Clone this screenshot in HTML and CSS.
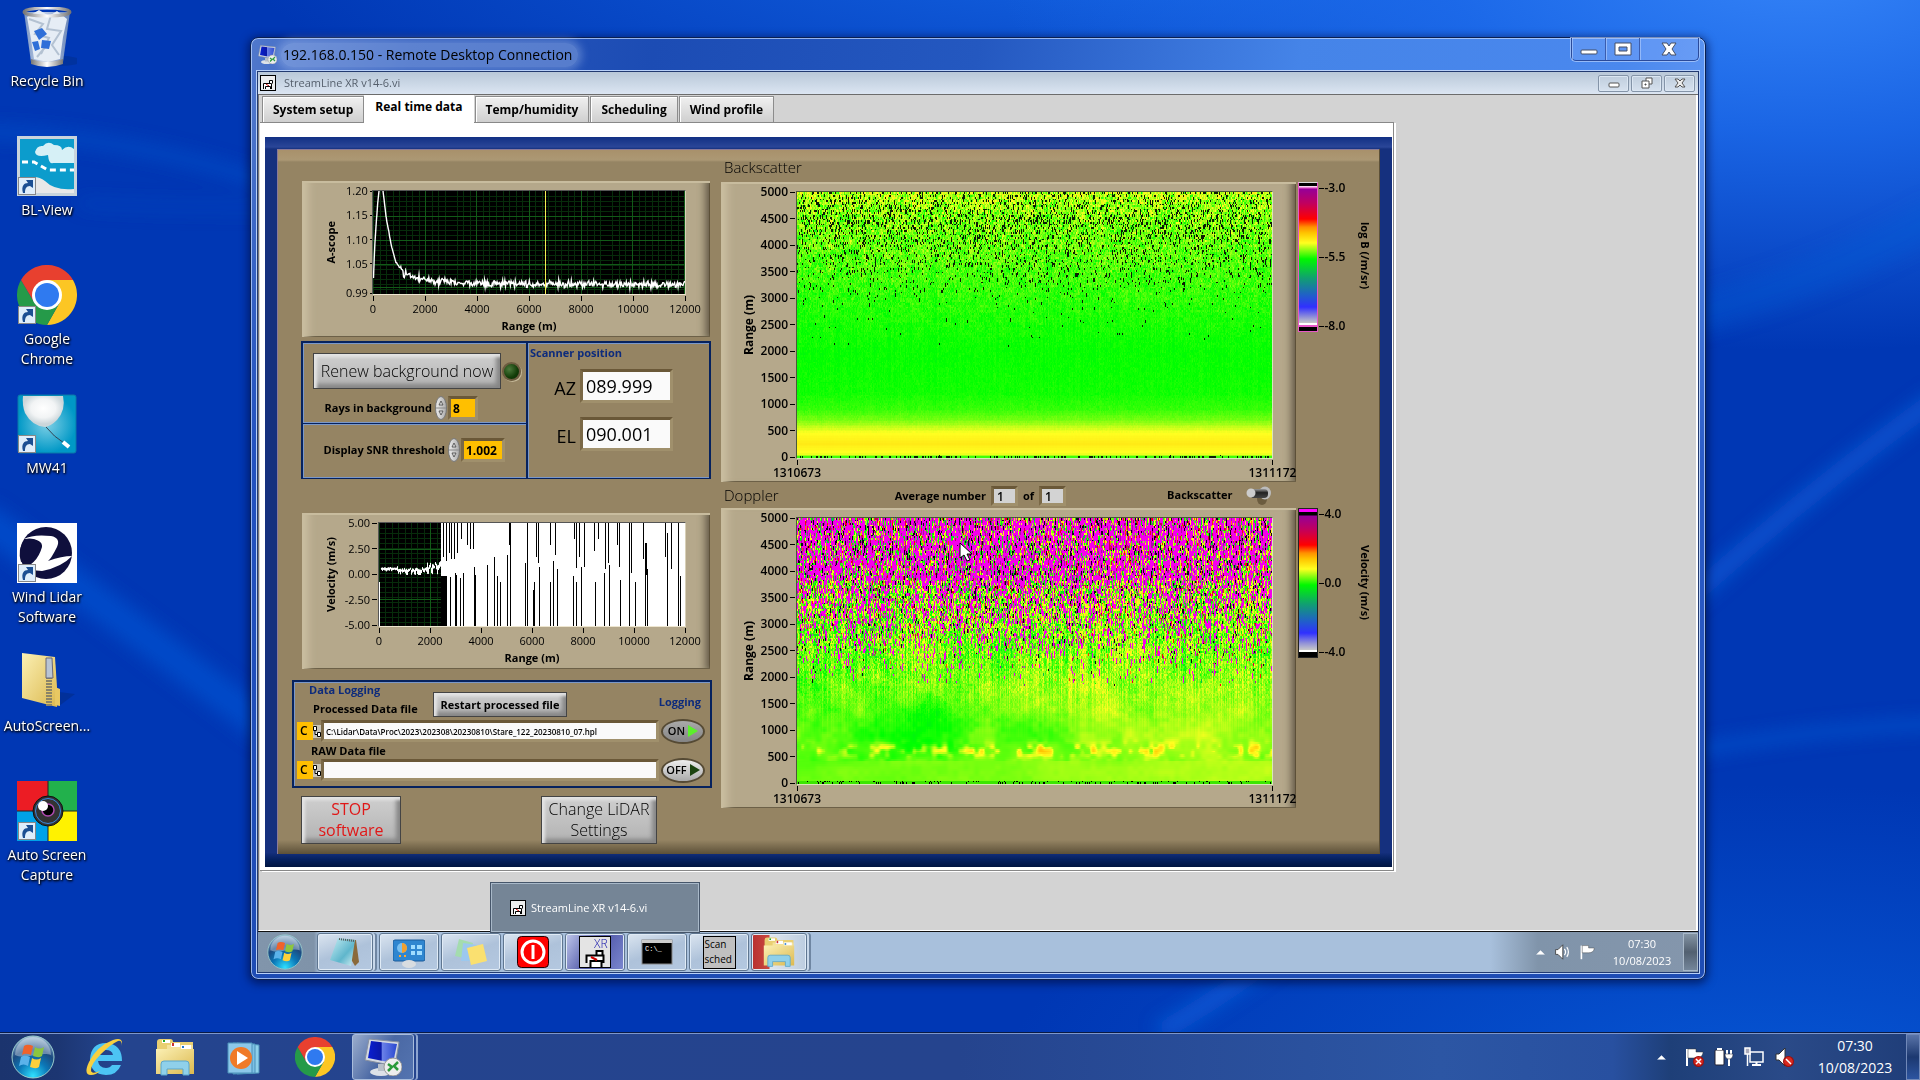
FILE: index.html
```html
<!DOCTYPE html>
<html lang="en">
<head>
<meta charset="utf-8">
<title>Remote Desktop Connection</title>
<link rel="stylesheet" href="styles.css">
</head>
<body>
<svg class="defs" aria-hidden="true">
  <defs>
    <linearGradient id="gBin" x1="0" x2="1"><stop offset="0" stop-color="#8fa6c4"/><stop offset=".4" stop-color="#e8eef6"/><stop offset="1" stop-color="#7c94b8"/></linearGradient>
    <linearGradient id="gMetal" x1="0" x2="1"><stop offset="0" stop-color="#777"/><stop offset=".5" stop-color="#fff"/><stop offset="1" stop-color="#777"/></linearGradient>
    <radialGradient id="gOrb" cx=".5" cy=".95" r=".9"><stop offset="0" stop-color="#2fe0ff"/><stop offset=".4" stop-color="#0b78b8"/><stop offset=".7" stop-color="#1c4a80"/><stop offset="1" stop-color="#8fb0cc"/></radialGradient>
    <linearGradient id="gFold" x1="0" x2="1" y2="1"><stop offset="0" stop-color="#fbf0b4"/><stop offset="1" stop-color="#dcb94f"/></linearGradient>
    <radialGradient id="gMw"><stop offset="0" stop-color="#7fd0e6"/><stop offset="1" stop-color="#0098c6"/></radialGradient>
    <radialGradient id="gBall" cx=".5" cy=".4"><stop offset="0" stop-color="#fff"/><stop offset=".6" stop-color="#f2f4f5"/><stop offset="1" stop-color="#ccd6da"/></radialGradient>
    <linearGradient id="gScr" x1="0" x2="1"><stop offset="0" stop-color="#0a1fd0"/><stop offset=".45" stop-color="#0a18a8"/><stop offset=".5" stop-color="#6a80e8"/><stop offset="1" stop-color="#2a48d0"/></linearGradient>
    <linearGradient id="gPad" x1="0" x2="1" y2="1"><stop offset="0" stop-color="#c8eef4"/><stop offset=".6" stop-color="#5fb6cc"/><stop offset="1" stop-color="#d8f0f4"/></linearGradient>
    <linearGradient id="gSpin" x1="0" x2="1"><stop offset="0" stop-color="#eee"/><stop offset="1" stop-color="#aaa"/></linearGradient>
    <linearGradient id="gLever" y2="1" x2="0"><stop offset="0" stop-color="#999"/><stop offset=".4" stop-color="#222"/><stop offset="1" stop-color="#444"/></linearGradient>
    <filter id="soft" x="-20%" y="-20%" width="140%" height="140%"><feGaussianBlur stdDeviation="9"/></filter>

    <symbol id="shortcut" viewBox="0 0 18 18"><rect x=".5" y=".5" width="17" height="17" fill="#dfeefb" stroke="#888"/><path d="M5 16C3 9 6 6 10 6L8 3h7v8l-3-2c-4 0-5 3-5 7z" fill="#1c4f92"/></symbol>
    <symbol id="chrome" viewBox="0 0 60 60"><path d="M30 15H56A30 30 0 0 1 30 60L43 37z" fill="#fcc624"/><path d="M17 37L4 15A30 30 0 0 0 30 60L43 37z" fill="#259a49"/><path d="M4 15A30 30 0 0 1 56 15H30L17 37z" fill="#e8402f"/><circle cx="30" cy="30" r="15" fill="#fff"/><circle cx="30" cy="30" r="12" fill="#2f7af0"/></symbol>
    <symbol id="orb" viewBox="0 0 44 44"><circle cx="22" cy="22" r="21" fill="url(#gOrb)" stroke="#9cc" stroke-width="1"/><path d="M4 20A18 18 0 0 1 40 20C30 16 14 25 4 20z" fill="#fff" opacity=".35"/><path d="M13 11c3-2 6-1 9 0l-2 9c-3-1-6-2-9 0z" fill="#f0622a"/><path d="M24 12c3 2 6 2 9 0l-2 9c-3 2-6 1-9 0z" fill="#8cc63f"/><path d="M10 22c3-2 6-1 9 0l-2 9c-3-2-6-2-9 0z" fill="#5ab2ea"/><path d="M21 23c3 2 6 2 9 0l-2 9c-3 2-6 1-9 0z" fill="#fdd03b"/></symbol>
    <symbol id="explorer" viewBox="0 0 40 38"><path d="M2 4q0-3 3-3h10q3 0 3 3h20v30H2z" fill="#e9cf72"/><rect x="7" y="2" width="8" height="3" fill="#fff"/><rect x="8" y="2" width="2" height="2" fill="#2a2"/><path d="M12 7h26v5H12z" fill="#f4e29a"/><rect x="16" y="5" width="9" height="4" fill="#fff"/><rect x="17" y="5" width="2" height="3" fill="#c33"/><rect x="26" y="7" width="10" height="4" fill="#fff"/><rect x="27" y="8" width="2" height="2" fill="#27c"/><path d="M1 11h38v25H1z" fill="url(#gFold)"/><path d="M6 26q0-3 3-3h22q3 0 3 3v11h-6v-6H12v6H6z" fill="#8fd0ea" stroke="#5aa6cc"/></symbol>
    <symbol id="xr" viewBox="0 0 16 16"><rect x=".5" y=".5" width="15" height="15" fill="#eee" stroke="#000"/><path d="M3.500 14V8.500h8V14M5.500 14v-2.500h5V14M9.500 8.500v-3h3v3" fill="#fff" stroke="#000"/><path d="M6 9l3 2" stroke="#c00"/></symbol>
    <symbol id="rdp" viewBox="0 0 38 38"><ellipse cx="17" cy="34" rx="11" ry="4" fill="#dde2e8"/><path d="M14 26h8v7h-8z" fill="#b8c0ca"/><path d="M5 1l30 3-4 24L1 22z" fill="#d3d9e2" stroke="#8890a0"/><path d="M7 3l26 3-4 19L4 20z" fill="url(#gScr)"/><circle cx="29" cy="29" r="9" fill="#eee" stroke="#999"/><path d="M24 26l4 3-4 4M34 24l-4 4 4 4" fill="none" stroke="#2a9a3a" stroke-width="2.500"/></symbol>
    <symbol id="spk" viewBox="0 0 20 20"><path d="M2 7h3l6-6v18l-6-6H2z" fill="#fff" stroke="#333"/></symbol>
    <symbol id="flag" viewBox="0 0 20 20"><path d="M3 2v17" stroke="#fff" stroke-width="2"/><path d="M4 2h8v3h7v1q-1 5-7 5h-8z" fill="#fff" stroke="#333" stroke-width=".5"/></symbol>
    <symbol id="bad" viewBox="0 0 10 10"><circle cx="5" cy="5" r="4.500" fill="#d92a20" stroke="#911"/></symbol>
    <symbol id="up" viewBox="0 0 10 6"><path d="M0 6l5-5 5 5z" fill="#fff"/></symbol>
    <symbol id="spin" viewBox="0 0 12 24"><ellipse cx="6" cy="12" rx="5.500" ry="11.500" fill="url(#gSpin)" stroke="#777"/><path d="M1 12h10" stroke="#888"/><path d="M4 9l2-4 2 4zM4 15h4l-2 4z" fill="#ddd" stroke="#444" stroke-width=".8"/></symbol>
    <symbol id="tree" viewBox="0 0 8 13"><path d="M0 0h8v13H0z" fill="#c8c4b8"/><path d="M.5 1.500h3v4h-3zM4.500 7.500h3v4h-3zM2 5.500v4h2.500" fill="#fff" stroke="#000"/></symbol>
  </defs>
</svg>

<div class="desktop">
  <svg class="wallpaper" viewBox="0 0 1920 1080" preserveAspectRatio="none" aria-hidden="true">
    <g filter="url(#soft)" fill="none">
      <path d="M-20 138Q120 140 270 192" stroke="#0a55d0" stroke-width="14" opacity=".5"/>
      <path d="M80 212Q160 218 270 217" stroke="#0a50c8" stroke-width="8" opacity=".5"/>
      <path d="M-20 540Q100 630 270 765" stroke="#0a5ad8" stroke-width="34" opacity=".55"/>
      <path d="M1160 1080Q1280 1010 1450 850 1600 700 1707 610 1820 505 1940 415" stroke="#0f66e4" stroke-width="20" opacity=".55"/>
      <path d="M1690 330Q1830 290 1940 225" stroke="#0c60dc" stroke-width="40" opacity=".3"/>
      <path d="M1690 786Q1820 762 1940 757" stroke="#0c62de" stroke-width="12" opacity=".5"/>
    </g>
  </svg>

  <nav class="shortcuts" aria-label="Desktop icons">
    <a href="#bin" class="shortcut"><svg viewBox="0 0 60 60"><ellipse cx="44" cy="54" rx="20" ry="5" fill="#012a80" opacity=".4"/><path d="M7 5h46l-7 50q-16 6-32 0z" fill="url(#gBin)" opacity=".85"/><path d="M10 10l12-7 10 6 8-5 10 8-4 18-3 22-12 3-14-3-3-20z" fill="#e6edf5"/><path d="M12 12l14 5-8 10 14 4-8 16M34 8l-4 14 14 2-9 14 7 10M20 50l10-12" fill="none" stroke="#b4c2d2" stroke-width="2"/><path d="M17 24l8-3 5 6-8 6zM25 33l9 1-2 8-8-1zM15 35l6-1 2 8-5 2z" fill="#2f6fd8"/><ellipse cx="30" cy="5" rx="23" ry="4" fill="none" stroke="url(#gMetal)" stroke-width="3"/><path d="M14 52q16 6 32 0v5q-16 6-32 0z" fill="url(#gMetal)"/></svg><span>Recycle Bin</span></a>
    <a href="#blview" class="shortcut"><svg viewBox="0 0 60 60"><rect width="60" height="60" fill="#c8d4dc"/><rect x="3" y="3" width="54" height="54" fill="#0c9ccc"/><path d="M18 16q2-7 8-6 5-6 11-1 8 0 8 5 6-6 12-1v14H36q-4 2-5-8-12 3-13-3z" fill="#d6f0f6"/><path d="M5 26h12l14 8h26" fill="none" stroke="#fff" stroke-width="3" stroke-dasharray="6 4"/><path d="M3 45q15-8 25 0 10 10 29 8v4H3z" fill="#e8e8e8"/><use href="#shortcut" x="1" y="41" width="18" height="18"/></svg><span>BL-View</span></a>
    <a href="#chrome" class="shortcut"><svg viewBox="0 0 60 60"><use href="#chrome" width="60" height="60"/><use href="#shortcut" x="1" y="41" width="18" height="18"/></svg><span>Google Chrome</span></a>
    <a href="#mw41" class="shortcut"><svg viewBox="0 0 60 60"><rect x="1" y="1" width="58" height="58" rx="2" fill="url(#gMw)" stroke="#0a78a8"/><path d="M6 2h40q3 14-6 24-6 6-12 7-13-1-20-14-3-8-2-17z" fill="url(#gBall)"/><path d="M29 33q8 10 18 16" stroke="#345" fill="none"/><path d="M46 48l6 5" stroke="#fff" stroke-width="4"/><use href="#shortcut" x="1" y="41" width="18" height="18"/></svg><span>MW41</span></a>
    <a href="#lidar" class="shortcut"><svg viewBox="0 0 60 60"><rect width="60" height="60" fill="#fff"/><circle cx="29" cy="30" r="26" fill="#0f0f3c"/><path d="M7 16Q16 11 34 13q10 2 6 11-6 12-9 14Q45 33 55 33q-10 11-30 15L3 46Q20 42 25 24 26 15 7 16z" fill="#fff"/><path d="M8 16Q20 14 24 22 24 34 4 39 0 26 8 16z" fill="#0f0f3c"/><use href="#shortcut" x="1" y="41" width="18" height="18"/></svg><span>Wind Lidar Software</span></a>
    <a href="#zip" class="shortcut"><svg viewBox="0 0 60 60"><path d="M42 40l16 2-16 12z" fill="#012a80" opacity=".5"/><path d="M5 1l33 4 2 30v20L5 46z" fill="url(#gFold)"/><path d="M38 35l5 2v17l-5-1z" fill="#e8c862"/><path d="M32 25v29" stroke="#8a8468" stroke-width="6" stroke-dasharray="2 1"/><path d="M29 6h6l1 20h-7z" fill="#b8c4d4" stroke="#667"/></svg><span>AutoScreen...</span></a>
    <a href="#asc" class="shortcut"><svg viewBox="0 0 60 60"><rect width="31" height="30" fill="#ec1c24"/><rect x="31" width="29" height="30" fill="#22b14c"/><rect y="30" width="31" height="30" fill="#00a2e8"/><rect x="31" y="30" width="29" height="30" fill="#fff200"/><path d="M31 0v60M0 30h60" stroke="#222"/><circle cx="31" cy="30" r="15" fill="#333" stroke="#111"/><circle cx="31" cy="30" r="12.500" fill="none" stroke="#3a8ae0"/><circle cx="31" cy="29" r="6" fill="#000" stroke="#b04ab0" stroke-width="1.500"/><circle cx="26" cy="25" r="5" fill="#fff"/><use href="#shortcut" x="1" y="41" width="18" height="18"/></svg><span>Auto Screen Capture</span></a>
  </nav>

  <section class="window">
    <header class="window-title">
      <svg class="window-icon" viewBox="0 0 38 38"><use href="#rdp"/></svg>
      <h1>192.168.0.150 - Remote Desktop Connection</h1>
      <div class="window-buttons">
        <button aria-label="Minimise"><svg viewBox="0 0 20 16"><rect x="2" y="9" width="16" height="4" rx="1" fill="#fff" stroke="#444f66"/></svg></button>
        <button aria-label="Maximise"><svg viewBox="0 0 20 16"><path d="M2 2h16v12H2zM6 6v4h8V6z" fill="#fff" fill-rule="evenodd" stroke="#444f66"/></svg></button>
        <button class="close" aria-label="Close"><svg viewBox="0 0 20 16"><path d="M3 2h5l2 3 2-3h5l-4 6 4 6h-5l-2-3-2 3H3l4-6z" fill="#fff" stroke="#444f66"/></svg></button>
      </div>
    </header>
    <div class="client">
      <header class="app-title">
        <svg class="vi-icon" viewBox="0 0 16 16"><use href="#xr"/></svg>
        <h2>StreamLine XR v14-6.vi</h2>
        <div class="app-buttons">
          <button aria-label="Minimise"><svg viewBox="0 0 12 12"><rect x="1" y="6" width="10" height="4" rx="1" fill="#fff" stroke="#555"/></svg></button>
          <button aria-label="Restore"><svg viewBox="0 0 12 12"><path d="M5 1h6v6H5z" fill="#fff" stroke="#555"/><path d="M1 4h7v7H1z" fill="#fff" stroke="#555"/><path d="M4 7h1v1H4z" stroke="#555"/></svg></button>
          <button aria-label="Close"><svg viewBox="0 0 12 12"><path d="M1 2h3l2 2 2-2h3L8 6l3 4H8L6 8l-2 2H1l3-4z" fill="#eee" stroke="#555"/></svg></button>
        </div>
      </header>

      <main class="workspace">
        <div class="tabs" role="tablist">
          <button role="tab">System setup</button>
          <button role="tab" aria-selected="true">Real time data</button>
          <button role="tab">Temp/humidity</button>
          <button role="tab">Scheduling</button>
          <button role="tab">Wind profile</button>
        </div>
        <div class="sheet"><div class="frame"><div class="panel">
          <div class="controls">
            <section class="graph small">
              <div class="y-title">A-scope</div>
              <div class="y-axis uneven"><b>1.20</b><b>1.15</b><b>1.10</b><b>1.05</b><b>0.99</b></div>
              <div class="plot"><canvas id="ascope" width="314" height="105"></canvas></div>
              <div class="x-axis"><b>0</b><b>2000</b><b>4000</b><b>6000</b><b>8000</b><b>10000</b><b>12000</b></div>
              <div class="x-title">Range (m)</div>
            </section>

            <section class="settings">
              <div class="cell renew">
                <div class="row"><button class="key light">Renew background now</button><i class="led"></i></div>
                <div class="row spin-row"><label for="rays">Rays in background</label><svg class="spin" viewBox="0 0 12 24"><use href="#spin"/></svg><input id="rays" class="field amber rays" value="8"></div>
              </div>
              <div class="cell snr"><label for="snr">Display SNR threshold</label><svg class="spin" viewBox="0 0 12 24"><use href="#spin"/></svg><input id="snr" class="field amber" value="1.002"></div>
              <div class="cell scanner">
                <h3>Scanner position</h3>
                <div class="angle"><label for="az">AZ</label><input id="az" class="field" value="089.999" readonly></div>
                <div class="angle"><label for="el">EL</label><input id="el" class="field" value="090.001" readonly></div>
              </div>
            </section>

            <section class="graph small velocity">
              <div class="y-title">Velocity (m/s)</div>
              <div class="y-axis"><b>5.00</b><b>2.50</b><b>0.00</b><b>-2.50</b><b>-5.00</b></div>
              <div class="plot"><canvas id="velocity" width="308" height="104"></canvas></div>
              <div class="x-axis"><b>0</b><b>2000</b><b>4000</b><b>6000</b><b>8000</b><b>10000</b><b>12000</b></div>
              <div class="x-title">Range (m)</div>
            </section>

            <section class="logging">
              <div class="log-head">
                <div><h3>Data Logging</h3><label for="proc">Processed Data file</label></div>
                <button class="key bold">Restart processed file</button>
                <h3 class="log-state">Logging</h3>
              </div>
              <div class="log-row"><span class="drive">C</span><svg class="tree" viewBox="0 0 8 13"><use href="#tree"/></svg><input id="proc" class="field path" value="C:\Lidar\Data\Proc\2023\202308\20230810\Stare_122_20230810_07.hpl"><button class="oval on" aria-pressed="true">ON<i></i></button></div>
              <label class="raw-label" for="raw">RAW Data file</label>
              <div class="log-row"><span class="drive">C</span><svg class="tree" viewBox="0 0 8 13"><use href="#tree"/></svg><input id="raw" class="field path" value=""><button class="oval" aria-pressed="false">OFF<i></i></button></div>
            </section>

            <div class="actions">
              <button class="key light stop">STOP<br>software</button>
              <button class="key light change">Change LiDAR<br>Settings</button>
            </div>
          </div>

          <div class="maps">
            <div class="map-head first"><h3>Backscatter</h3></div>
            <div class="map-row">
              <section class="graph large">
                <div class="y-title">Range (m)</div>
                <div class="y-axis"><b>5000</b><b>4500</b><b>4000</b><b>3500</b><b>3000</b><b>2500</b><b>2000</b><b>1500</b><b>1000</b><b>500</b><b>0</b></div>
                <div class="plot"><canvas id="backscatter" width="477" height="160"></canvas></div>
                <div class="x-axis"><b>1310673</b><b>1311172</b></div>
              </section>
              <div class="ramp pink"></div>
              <div class="ramp-axis"><b>-3.0</b><b>-5.5</b><b>-8.0</b></div>
              <div class="ramp-title">log B (/m/sr)</div>
            </div>
            <div class="map-head">
              <h3>Doppler</h3>
              <div class="average"><label for="avg">Average number</label><input id="avg" class="field grey" value="1" readonly><label for="avgof">of</label><input id="avgof" class="field grey" value="1" readonly></div>
              <div class="toggle"><span id="bsw">Backscatter</span><button role="switch" aria-checked="false" aria-labelledby="bsw"><svg viewBox="0 0 26 22"><ellipse cx="16" cy="15" rx="5" ry="6" fill="#5a4c30" opacity=".7"/><ellipse cx="19" cy="9" rx="6" ry="6.500" fill="#bbb"/><rect x="4" y="5" width="18" height="9" rx="4" fill="url(#gLever)"/><circle cx="5" cy="9" r="4.500" fill="#ccc"/></svg></button></div>
            </div>
            <div class="map-row">
              <section class="graph large">
                <div class="y-title">Range (m)</div>
                <div class="y-axis"><b>5000</b><b>4500</b><b>4000</b><b>3500</b><b>3000</b><b>2500</b><b>2000</b><b>1500</b><b>1000</b><b>500</b><b>0</b></div>
                <div class="plot"><canvas id="doppler" width="477" height="160"></canvas><svg class="cursor" viewBox="0 0 13 20"><path d="M1 1v15l4-3 3 6 3-1-3-6h5z" fill="#fff" stroke="#000"/></svg></div>
                <div class="x-axis"><b>1310673</b><b>1311172</b></div>
              </section>
              <div class="ramp"></div>
              <div class="ramp-axis"><b>4.0</b><b>0.0</b><b>-4.0</b></div>
              <div class="ramp-title">Velocity (m/s)</div>
            </div>
          </div>
        </div></div></div>
      </main>

      <footer class="inner-bar">
        <button class="inner-start" aria-label="Start"><svg viewBox="0 0 44 44"><use href="#orb"/></svg></button>
        <button class="task stack" aria-label="Notepad"><svg viewBox="0 0 32 32"><path d="M10 3l17 1 3 22-4 4z" fill="#8a6a3a"/><path d="M9 2l17 2-4 26L1 24z" fill="url(#gPad)"/><path d="M10 3l15 2" stroke="#555" stroke-width="2" stroke-dasharray="1 1"/></svg></button>
        <button class="task" aria-label="Control panel"><svg viewBox="0 0 32 32"><rect x="0" y="4" width="32" height="21" rx="2" fill="#2f86d0" stroke="#1a5a9a"/><circle cx="9" cy="12" r="5" fill="#7ac0f0"/><path d="M9 12V7a5 5 0 0 1 0 10z" fill="#f0a030"/><path d="M18 9h4v4h-4zM24 9h5v4h-5zM18 15h4v4h-4zM24 15h5v4h-5z" fill="#9fdcff"/><path d="M6 20h2M11 20h2" stroke="#fa3" stroke-width="2"/><ellipse cx="16" cy="28" rx="7" ry="4" fill="#d8dce0"/></svg></button>
        <button class="task" aria-label="Sticky notes"><svg viewBox="0 0 32 32"><path d="M4 3l14 4-4 16-14-3z" fill="#a4dcae"/><path d="M8 7l14 2v16H6z" fill="#9cc8ee"/><path d="M12 12l16-4 4 17-16 4z" fill="#fae070"/></svg></button>
        <button class="task" aria-label="Shutdown"><svg viewBox="0 0 32 32"><rect x=".5" y=".5" width="31" height="31" rx="4" fill="#f00" stroke="#200"/><circle cx="16" cy="16" r="11" fill="none" stroke="#fff" stroke-width="3"/><path d="M16 9v14" stroke="#fff" stroke-width="3"/></svg></button>
        <div class="task-wrap">
          <div class="preview"><svg class="vi-icon" viewBox="0 0 16 16"><use href="#xr"/></svg>StreamLine XR v14-6.vi</div>
          <button class="task active" aria-label="StreamLine XR"><svg viewBox="0 0 32 32"><rect x=".5" y=".5" width="31" height="31" fill="#e4e4e4" stroke="#000"/><path d="M7.500 27V19.500h17V27M11.500 31v-6h11v6M17.500 19v-4h6v4" fill="#fff" stroke="#000" stroke-width="2"/><path d="M12 21l6 3" stroke="#c00" stroke-width="2"/><text x="15" y="12" class="svg-xr">XR</text></svg></button>
        </div>
        <button class="task" aria-label="Command prompt"><svg viewBox="0 0 32 32"><rect x="1" y="4" width="30" height="24" fill="#000" stroke="#888"/><path d="M1 4h30v3H1z" fill="#ccc"/><text x="4" y="15" class="svg-cmd">C:\_</text></svg></button>
        <button class="task" aria-label="Scan scheduler"><span class="scan"><span>Scan</span><span>sched</span></span></button>
        <button class="task stack red" aria-label="Explorer"><svg viewBox="0 0 40 38"><use href="#explorer"/></svg></button>
        <div class="inner-tray">
          <svg class="up" viewBox="0 0 10 6"><use href="#up"/></svg>
          <svg class="tray" viewBox="0 0 20 20"><use href="#spk"/><path d="M13 6q3 4 0 8M16 4q4 6 0 12" fill="none" stroke="#fff" stroke-width="1.500"/></svg>
          <svg class="tray" viewBox="0 0 20 20"><use href="#flag"/></svg>
          <time>07:30<br>10/08/2023</time>
        </div>
        <button class="peek" aria-label="Show desktop"></button>
      </footer>
    </div>
  </section>
</div>

<footer class="taskbar">
  <button aria-label="Start" class="start"><svg viewBox="0 0 44 44"><use href="#orb"/></svg></button>
  <button aria-label="Internet Explorer"><svg viewBox="0 0 40 40"><path d="M37 24H13q1 7 8 7 4 0 6-3h9q-4 10-15 10Q5 37 5 22 6 6 21 6q16 1 16 18zM13 18h15q-1-5-7-5t-8 5z" fill="#4cc4f4"/><path d="M37 5Q36 0 28 3 12 9 4 25-2 38 6 38q5 0 9-4-9 4-9-1 0-6 10-16Q26 7 33 4q4-1 4 5z" fill="#f8d040"/></svg></button>
  <button aria-label="Explorer"><svg viewBox="0 0 40 38"><use href="#explorer"/></svg></button>
  <button aria-label="Media player"><svg viewBox="0 0 40 40"><path d="M12 6l22 2v28l-22 1z" fill="#8fd0ea" stroke="#4a90b8"/><path d="M8 6l22 1v29l-22 1z" fill="#7cc0e4" stroke="#4a90b8"/><path d="M3 6h24v30H3z" fill="#8cc8ea" stroke="#4a90b8"/><circle cx="16" cy="21" r="11" fill="#f07a28"/><path d="M12 14v14l11-7z" fill="#fff"/></svg></button>
  <button aria-label="Chrome"><svg viewBox="0 0 60 60"><use href="#chrome"/></svg></button>
  <button aria-label="Remote Desktop" class="running"><svg viewBox="0 0 38 38"><use href="#rdp"/></svg></button>
  <div class="notify">
    <svg class="up" viewBox="0 0 10 6"><use href="#up"/></svg>
    <svg class="tray" viewBox="0 0 20 20"><use href="#flag"/><use href="#bad" x="9" y="9" width="11" height="11"/><path d="M12 12l5 5M17 12l-5 5" stroke="#fff" stroke-width="1.500"/></svg>
    <svg class="tray" viewBox="0 0 20 20"><rect x="1" y="3" width="9" height="15" rx="1" fill="#fff" stroke="#223"/><path d="M3 2h5" stroke="#fff" stroke-width="2"/><path d="M13 3v4M17 3v4M15 11v8" stroke="#fff" stroke-width="2"/><path d="M11 7h8q0 5-4 5T11 7z" fill="#fff" stroke="#223" stroke-width=".5"/></svg>
    <svg class="tray" viewBox="0 0 20 20"><path d="M6 5h13v10H6z" fill="#2a4a80" stroke="#fff" stroke-width="1.500"/><path d="M8 18h9M12.500 15v3" stroke="#fff" stroke-width="2"/><path d="M1 1h5v6H1zM3.500 7v12" fill="#aab" stroke="#fff" stroke-width="1.500"/></svg>
    <svg class="tray" viewBox="0 0 20 20"><use href="#spk"/><use href="#bad" x="9" y="9" width="11" height="11"/><path d="M12 12l5 5" stroke="#fff" stroke-width="1.500"/></svg>
    <time>07:30<br>10/08/2023</time>
  </div>
  <button class="peek" aria-label="Show desktop"></button>
</footer>
<script src="app.js"></script>
</body>
</html>
```
FILE: styles.css
```css
* { box-sizing: border-box; }
html, body { height: 100%; margin: 0; }
body { display: flex; flex-direction: column; overflow: hidden; background: #0037b4; font: 12px/16px "Open Sans", "Noto Sans", sans-serif; color: #000; }
h1, h2, h3 { margin: 0; font: inherit; }
button { margin: 0; padding: 0; border: 0; background: none; font: inherit; color: inherit; }
svg { display: block; flex: none; }
.defs { position: absolute; width: 0; height: 0; }

/* Desktop */
.desktop { position: relative; flex: 1; min-height: 0;
  background:
    radial-gradient(ellipse 42% 38% at 94% -4%, #3584f8 0, rgba(30,108,236,.85) 45%, rgba(0,60,190,0) 100%),
    radial-gradient(ellipse 50% 24% at 62% -6%, #1668e8 0, rgba(0,80,210,0) 100%),
    radial-gradient(ellipse 40% 30% at 92% 106%, #0656d4 0, rgba(0,60,190,0) 100%),
    #0037b4; }
.wallpaper { position: absolute; inset: 0; width: 100%; height: 100%; }
.shortcuts { position: relative; width: 94px; padding-top: 7px; display: flex; flex-direction: column; }
.shortcut { height: 129px; display: flex; flex-direction: column; align-items: center; gap: 4px; color: #fff; text-decoration: none; text-align: center; font-size: 14px; line-height: 20px; text-shadow: 1px 1px 2px #000, 0 1px 3px #000; }
.shortcut svg { width: 60px; height: 60px; }
.shortcut span { padding: 0 4px; }

/* Remote desktop window */
.window { position: absolute; left: 250px; top: 37px; right: 214px; bottom: 52px; display: flex; flex-direction: column; border: 1px solid #0b2050; border-radius: 8px;
  background: linear-gradient(180deg, rgba(20,70,190,0) 0, rgba(28,76,190,0) 8%, rgba(28,76,190,.8) 45%, #1e4cb4 100%), linear-gradient(100deg, #5078cc 0, #2a58bc 10%, #1c4cb4 25%, #2458c0 45%, #4584e8 65%, #4a88ee 85%, #7aa8f8 100%);
  box-shadow: inset 0 0 0 1px rgba(190,214,255,.75), 0 2px 8px 2px rgba(0,10,60,.6); }
.window-title { height: 32px; display: flex; align-items: flex-start; padding-left: 7px; }
.window-icon { width: 19px; height: 19px; margin-top: 7px; }
.window-title h1 { margin: 5px 0 0 4px; padding: 2px 6px 2px 2px; font-size: 14px; line-height: 20px; border-radius: 12px; background: rgba(190,210,245,.35); box-shadow: 0 0 8px 4px rgba(190,210,245,.35); }
.window-buttons { margin: 0 6px 0 auto; display: flex; height: 23px; border: 1px solid #2a4a9a; border-top: 0; border-radius: 0 0 5px 5px; box-shadow: 0 0 0 1px rgba(200,220,255,.6); background: rgba(140,180,255,.3); }
.window-buttons button { width: 34px; display: grid; place-items: center; border-right: 1px solid #3a5cae; box-shadow: inset 1px 0 rgba(200,220,255,.5); }
.window-buttons .close { width: 58px; border-right: 0; }
.window-buttons svg { width: 20px; height: 16px; }
.client { flex: 1; min-height: 0; margin: 0 5px 5px; border: 1px solid #b8d0f8; display: flex; flex-direction: column; background: #d3d3d3; outline: 1px solid #223a70; outline-offset: -2px; padding: 1px; }

.app-title { height: 23px; flex: none; display: flex; align-items: center; padding: 0 3px 0 2px; background: linear-gradient(#b9c8d8, #dbe5f2); border-bottom: 1px solid #6c6c6c; }
.vi-icon { width: 16px; height: 16px; }
.app-title h2 { margin-left: 8px; font-size: 11px; color: #555f6c; }
.app-buttons { margin-left: auto; display: flex; gap: 2px; }
.app-buttons button { width: 31px; height: 17px; display: grid; place-items: center; border: 1px solid #8494a8; border-radius: 2px; box-shadow: inset 0 0 0 1px #dbe6f2; }
.app-buttons svg { width: 12px; height: 12px; }

.workspace { flex: 1; min-height: 0; overflow: hidden; border-left: 1px solid #777; border-right: 2px solid #fff; border-bottom: 1px solid #fff; padding: 0 0 0 1px; }
.tabs { height: 27px; padding-left: 2px; display: flex; align-items: flex-end; }
.tabs button { height: 26px; padding: 0 10px; border: 1px solid #8c8c8c; border-bottom: 0; background: linear-gradient(#f0f0f0, #cfcfcf); box-shadow: inset 1px 1px #fff; font-weight: 700; line-height: 24px; }
.tabs button + button { margin-left: 1px; }
.tabs button[aria-selected="true"] { height: 28px; margin: 0 0 -1px; padding: 0 11px 4px; background: #fff; border-width: 0; position: relative; }
.sheet { width: 79%; padding: 14px 1px 3px 5px; background: #fff; border: 1px solid #888; border-left: 0; box-shadow: 2px 1px #fff; }
.frame { padding: 12px 12px 13px; background: linear-gradient(#123084 0, #2a4698 10px, #15307e 12px, #15307e 98%, #04205e 99%, #001440 100%); }
.panel { display: grid; grid-template-columns: 420px minmax(0, 1fr); gap: 9px; padding-left: 15px; box-shadow: inset -1px 0 #5c5038, inset 1px 1px #8a7a98;
  background: linear-gradient(#a8906a 0, #ac9874 11px, #958463 13px, #958463 calc(100% - 14px), #5c5038 100%); }

/* Graph widgets */
.graph { display: grid; background: #b5a88b; box-shadow: inset 2px 2px #c8bc9e, inset 10px 0 8px -4px #ccc0a2, inset -1px -1px #5c5038, inset -10px 0 8px -6px #5c5240; }
.graph.small { height: 156px; margin: 0 2px 0 10px; grid-template-columns: 44px 26px minmax(0, 1fr) 24px; grid-template-rows: 9px 105px 25px 17px; }
.graph.velocity { grid-template-columns: 38px 38px minmax(0, 1fr) 24px; }
.graph.large { grid-template-columns: 38px 37px minmax(0, 1fr) 23px; grid-template-rows: 9px 268px 23px; height: 300px; }
.y-title { grid-area: 2 / 1; writing-mode: vertical-rl; transform: rotate(180deg); justify-self: end; align-self: center; font-weight: 700; white-space: nowrap; font-size: 11px; }
.small .y-title { justify-self: start; margin-left: 21px; }
.large .y-title { font-size: 12px; margin-right: 2px; }
.y-axis { grid-area: 2 / 2; display: flex; flex-direction: column; justify-content: space-between; padding: 1px 0 2px; }
.y-axis.uneven { display: grid; grid-template-rows: 5fr 5fr 5fr 6fr 0; }
.y-axis b { height: 0; display: flex; align-items: center; justify-content: flex-end; gap: 2px; margin-right: 1px; }
.y-axis b::after, .ramp-axis b::before { content: ""; flex: none; width: 5px; height: 1px; background: #000; }
.small b { font-weight: 400; font-size: 11px; }
.large b, .ramp-axis b { font-weight: 600; font-size: 12px; }
.plot { grid-area: 2 / 3; position: relative; border: 1px solid #555; border-right-color: #d8d0b8; border-bottom-color: #eee6d0; background: #000; }
.plot canvas { display: block; width: 100%; height: 100%; image-rendering: pixelated; }
.large .plot { border-color: #4a5a38 #d8e8b8 #d8e8b8 #4a5a38; }
.x-axis { grid-area: 3 / 3; display: flex; justify-content: space-between; padding: 1px 1px 0; }
.x-axis b { width: 0; display: flex; flex-direction: column; align-items: center; white-space: nowrap; line-height: 16px; }
.x-axis b::before { content: ""; width: 1px; height: 5px; background: #000; }
.x-title { grid-area: 4 / 3; text-align: center; font-weight: 700; font-size: 11px; line-height: 12px; }
.cursor { position: absolute; left: 34%; top: 9%; width: 13px; height: 20px; }

/* Left column */
.controls { padding-top: 32px; padding-bottom: 10px; display: flex; flex-direction: column; }
label, .toggle span { font-weight: 700; font-size: 11px; white-space: nowrap; }
.controls h3 { font-weight: 700; font-size: 11px; color: #0d2b7c; }
.settings { margin: 4px 1px 34px 9px; height: 138px; display: grid; grid-template-columns: 223px 1fr; grid-template-rows: 79px 1fr; gap: 2px; padding: 2px; background: #06225e; }
.cell { background: #958463; box-shadow: inset 1px 1px #7b98c8, 0 1px #7b98c8; }
.scanner { grid-area: 1 / 2 / 3 / 3; padding: 2px 0 0 2px; }
.renew { padding: 10px 0 0 10px; }
.row { display: flex; align-items: center; }
.spin-row { padding: 7px 0 0 10px; }
.snr { display: flex; align-items: flex-start; padding: 14px 0 0 17px; }
.snr label, .spin-row label { width: 125px; text-align: right; line-height: 24px; }
.spin-row label { width: 109px; }
.spin { width: 12px; height: 24px; margin: 0 1px 0 3px; }
.key { border: 1px solid #444; background: linear-gradient(#cfcfcf, #b2b2b2); box-shadow: inset 3px 3px 3px #e4e4e4, inset -4px -4px 4px #868686; }
.light { font-weight: 300; font-size: 16px; }
.renew .key { width: 188px; height: 36px; }
.led { width: 19px; height: 19px; margin-left: 1px; border-radius: 50%; border: 2px solid #6c5c40; background: radial-gradient(circle at 35% 35%, #4c7a3c, #123c08 60%, #0a2a04); box-shadow: 1px 1px #c4b898; }
.field { min-width: 0; height: 26px; border: 3px solid; border-color: #6a5838 #a0906c #a0906c #7a6846; background: #fafafa; padding: 0 3px; font: inherit; color: #000; }
.amber { width: 44px; height: 24px; background: #ffbf00; font-weight: 700; padding: 0 2px; }
.amber.rays { width: 30px; }
.angle { display: flex; align-items: center; justify-content: flex-end; gap: 4px; padding-right: 36px; margin-top: 8px; }
.angle + .angle { margin-top: 14px; }
.angle label { font-weight: 400; font-size: 18px; line-height: 24px; padding-top: 4px; }
.angle .field { width: 93px; height: 34px; font-size: 18px; padding: 0 3px; }

.logging { margin: 11px 0 8px; height: 108px; border: 2px solid #06225e; box-shadow: inset 1px 1px #7b98c8; padding: 0 5px 0 3px; }
.log-head { display: flex; height: 37px; padding-left: 12px; }
.log-head > div { width: 124px; line-height: 16px; }
.log-head h3 { line-height: 16px; }
.log-head label { display: block; margin: 3px 0 0 4px; font-size: 11px; line-height: 16px; }
.log-head .key { width: 134px; height: 25px; margin: 10px 0 0; }
.bold { font-weight: 700; font-size: 11px; }
.log-head .log-state { margin-left: auto; padding: 12px 4px 0 0; }
.log-row { display: flex; align-items: center; height: 24px; }
.drive { width: 16px; height: 18px; padding-left: 3px; background: #ffbf00; line-height: 18px; font-weight: 600; }
.tree { width: 8px; height: 13px; }
.path { flex: 1; height: 22px; font-size: 8px; font-weight: 600; padding: 0 2px; }
.raw-label { display: block; margin-left: 14px; font-size: 11px; line-height: 15px; }
.oval { width: 44px; height: 25px; margin-left: 2px; border: 2px solid #554a34; border-radius: 50%; background: linear-gradient(#eee, #aaa); display: flex; align-items: center; justify-content: center; gap: 3px; font-size: 11px; font-weight: 600; }
.oval.on { background: linear-gradient(#aaa, #848484); }
.oval i { border: 6px solid transparent; border-left: 10px solid #1c4410; border-right: 0; }
.oval.on i { border-left-color: #5cf02c; }
.actions { display: flex; justify-content: space-between; padding: 0 55px 0 9px; }
.actions .key { height: 48px; line-height: 21px; }
.actions .stop { width: 100px; color: #e01818; font-weight: 400; }
.actions .change { width: 116px; }

/* Right column */
.maps { padding-top: 10px; }
.map-head { display: flex; align-items: center; height: 26px; padding-left: 3px; }
.map-head.first { height: 23px; align-items: flex-start; }
.map-head h3 { font-weight: 300; font-size: 15px; }
.average { margin-left: auto; display: flex; align-items: center; gap: 5px; padding-top: 2px; }
.average .field { width: 27px; height: 20px; background: #d3d3d3; padding: 0 3px; font-weight: 600; }
.toggle { display: flex; align-items: center; gap: 14px; margin: 0 108px 0 101px; }
.toggle svg { width: 26px; height: 22px; }
.map-row { display: grid; grid-template-columns: minmax(0, 1fr) 22px 29px 33px; }
.ramp { margin-left: 2px; height: 150px; border: 1px solid #222;
  background: linear-gradient(#ff00ff 0, #ff00ff 3px, #000 3px, #000 6px, #960098 7px, #c00060 20px, #ff0000 36px, #ff9000 44px, #ffc400 50px, #ffff20 60px, #00f800 76px, #10a070 95px, #2060c8 112px, #3030ff 124px, #9090d8 134px, #c8c8c8 141px, #fff 141px, #fff 143px, #000 143px); }
.ramp.pink { border-color: #ddd #e858c8 #e858c8;
  background: linear-gradient(#000 0, #000 3px, #fff 3px, #e858c8 5px, #960098 6px, #c00060 20px, #ff0000 36px, #ff9000 44px, #ffc400 50px, #ffff20 60px, #00f800 76px, #10a070 95px, #2060c8 112px, #3030ff 124px, #9090d8 134px, #c8c8c8 140px, #fff 140px, #fff 142px, #e858c8 142px, #e858c8 144px, #000 144px); }
.ramp-axis { height: 138px; margin-top: 6px; display: flex; flex-direction: column; justify-content: space-between; }
.ramp-axis b { height: 0; display: flex; align-items: center; padding-left: 1px; white-space: nowrap; }
.ramp-title { writing-mode: vertical-rl; height: 148px; text-align: center; font-weight: 700; font-size: 11px; line-height: 30px; }

/* Taskbar inside the session */
.inner-bar { height: 41px; flex: none; display: flex; border-top: 1px solid #111; padding: 1px 0;
  background: linear-gradient(90deg, #8195ab 0, #7f93a9 56px, #a8c0dc 62px, #a8c0dc 1232px, #8094aa 1280px, #8496ac 100%); }
.inner-start { width: 54px; margin-right: 5px; display: grid; place-items: center; }
.inner-start svg { width: 36px; height: 36px; }
.task { width: 60px; height: 38px; margin-right: 2px; display: grid; place-items: center; border: 1px solid #5f7690; border-radius: 3px; background: linear-gradient(160deg, #dbe5f0 0, #aec2da 50%, #b4c8e0); box-shadow: inset 0 0 0 1px #e0ebf6; }
.task svg { width: 32px; height: 32px; }
.task.stack { width: 56px; margin-right: 6px; box-shadow: inset 0 0 0 1px #e0ebf6, 2px 0 #c8d8ea, 4px 0 #6f86a2; }
.task.active { background: linear-gradient(120deg, #c0c8ec, #5058a8 50%, #7c88d0); }
.task.red { background: linear-gradient(90deg, #b83030 0, #c84840 17px, #dfe6ee 18px, #bccde0); }
.task-wrap { position: relative; }
.preview { position: absolute; bottom: 100%; left: -75px; width: 210px; height: 51px; border: 1px solid #46566a; background: #758596; box-shadow: inset 0 0 0 1px #a8b8c8; color: #fff; display: flex; align-items: center; gap: 5px; padding-left: 19px; font-size: 11px; white-space: nowrap; }
.svg-xr { font: 300 12px "Open Sans", sans-serif; fill: #11a; }
.svg-cmd { font: 7px "Liberation Mono", monospace; fill: #fff; }
.scan { width: 33px; height: 33px; border: 1px solid #000; background: #c0c0c0; font-size: 10px; line-height: 15px; text-align: left; padding-left: 1px; display: flex; flex-direction: column; }
.inner-tray { margin-left: auto; display: flex; align-items: center; gap: 9px; color: #fff; text-align: center; }
.inner-tray time { width: 70px; margin-left: 3px; font-size: 11px; line-height: 17px; }
.inner-tray .tray { width: 16px; height: 16px; }
.up { width: 9px; height: 6px; }
.peek { width: 15px; margin-left: 6px; border: 1px solid #a8b8c8; background: linear-gradient(#8494a4, #526070 50%, #74869a); }

/* Main taskbar */
.taskbar { height: 48px; flex: none; display: flex; align-items: stretch; border-top: 1px solid #0a1a44; box-shadow: inset 0 1px #7d97cc; padding: 1px 0 0 4px;
  background: linear-gradient(90deg, #1b346e 0, #1c3672 3%, #24448e 6%, #25448e 50%, #2c56a4 75%, #2850a0 84%, #1e3f78 87%, #2a4a88 93%, #1f3d78 100%); }
.taskbar button { width: 58px; display: grid; place-items: center; margin-right: 12px; }
.taskbar svg { width: 40px; height: 40px; }
.taskbar .start svg { width: 44px; height: 44px; }
.taskbar .start { margin-right: 14px; }
.taskbar .running { width: 62px; margin: 0 0 0 -4px; border: 1px solid #a8bcdc; border-radius: 3px; background: linear-gradient(120deg, #9aaccc, #4a68a4 50%, #5474b0); box-shadow: 2px 0 #24448e, 4px 0 #8ca4d0; }
.taskbar .running svg { width: 38px; height: 38px; }
.notify { margin-left: auto; display: flex; align-items: center; gap: 10px; color: #fff; text-align: center; }
.notify .up { width: 9px; height: 6px; margin-right: 8px; }
.notify .tray { width: 20px; height: 20px; }
.notify time { width: 82px; margin-left: 10px; font-size: 14px; line-height: 22px; }
.taskbar .peek { width: 14px; margin: 0 0 0 10px; border: 1px solid #7088b8; background: linear-gradient(#5a74a8, #1c3870 50%, #2c54a0); }
```
FILE: app.js
```js
// Repeatable pseudo-random numbers so the plots are the same on each load.
function prng(seed) {
  return function () {
    seed = (seed + 0x6D2B79F5) | 0;
    let t = Math.imul(seed ^ (seed >>> 15), 1 | seed);
    t = (t + Math.imul(t ^ (t >>> 7), 61 | t)) ^ t;
    return ((t ^ (t >>> 14)) >>> 0) / 4294967296;
  };
}
function lookup(stops, x) {
  for (let i = 1; i < stops.length; i++) {
    if (x <= stops[i][0]) {
      const a = stops[i - 1], b = stops[i];
      const f = Math.max(0, (x - a[0]) / (b[0] - a[0]));
      return a.slice(1).map((v, k) => v + (b[k + 1] - v) * f);
    }
  }
  return stops[stops.length - 1].slice(1);
}
const RAMP = [[0, 200, 200, 200], [0.13, 48, 48, 255], [0.3, 20, 130, 140], [0.47, 0, 255, 0], [0.59, 255, 255, 32], [0.7, 255, 190, 0], [0.77, 255, 0, 0], [1, 150, 0, 152]];

function smooth(seed, w, h) {
  const r = prng(seed), g = [];
  for (let i = 0; i < (w + 2) * (h + 2); i++) g.push(r() * 2 - 1);
  const s = t => t * t * (3 - 2 * t);
  return (u, v) => {
    const x = u * w, y = v * h, i = Math.floor(x), j = Math.floor(y), a = s(x - i), b = s(y - j), k = j * (w + 2) + i;
    return (g[k] * (1 - a) + g[k + 1] * a) * (1 - b) + (g[k + w + 2] * (1 - a) + g[k + w + 3] * a) * b;
  };
}
function paint(id, fn) {
  const c = document.getElementById(id), x = c.getContext('2d'), im = x.createImageData(c.width, c.height);
  for (let i = 0; i < c.width; i++) for (let j = 0; j < c.height; j++) {
    const p = fn(i, j, i / c.width, 5000 * (1 - j / (c.height - 1))), k = (j * c.width + i) * 4;
    im.data[k] = p[0]; im.data[k + 1] = p[1]; im.data[k + 2] = p[2]; im.data[k + 3] = 255;
  }
  x.putImageData(im, 0, 0);
}

const rb = prng(7), patch = smooth(17, 120, 60);
const level = [[0, 0.5, 0], [50, 0.58, 0], [250, 0.625, 0], [450, 0.59, 0.003], [520, 0.575, 0.005], [700, 0.525, 0.008], [900, 0.495, 0.01], [1200, 0.478, 0.01], [2000, 0.472, 0.012], [2600, 0.482, 0.02], [3200, 0.495, 0.035], [3900, 0.518, 0.055], [4500, 0.53, 0.07], [5000, 0.56, 0.08]];
const drop = [[0, 0.3], [10, 0.3], [32, 0], [1900, 0], [2400, 0.003], [3000, 0.014], [3500, 0.06], [4000, 0.11], [4400, 0.17], [4700, 0.15], [5000, 0.1]];
const colA = Array.from({ length: 477 }, () => (rb() - 0.5) * 0.012);
let black = 0;
paint('backscatter', (i, j, u, h) => {
  const l = lookup(level, h);
  if (black > 0 && h > 2500) { black--; return [10, 30, 5]; }
  if (rb() < lookup(drop, h)[0]) { if (rb() < 0.3) black = 1; return [10, 30, 5]; }
  return lookup(RAMP, l[0] + (rb() + rb() - 1) * l[1] + patch(u, h / 5000) * l[1] * 0.35 + colA[i] * Math.min(1, h / 2500));
});

const rd = prng(21), big = smooth(3, 7, 6), mid = smooth(5, 30, 22), fine = smooth(9, 90, 50), streak = smooth(31, 60, 3);
const noise = [[0, 0], [1800, 0], [2300, 0.06], [2700, 0.2], [3200, 0.42], [3750, 0.62], [3900, 0.95], [5000, 1.1]];
const col = Array.from({ length: 477 }, () => rd());
const colB = Array.from({ length: 477 }, () => (rd() - 0.5));
let hold = null, left = 0;
paint('doppler', (i, j, u, h) => {
  if (j === 0) left = 0;
  if (left > 0 && h > 1900) { left--; return hold; }
  const n = lookup(noise, h)[0];
  if (rd() < n * (0.4 + col[i] * 0.6 + streak(u, h / 5000) * 0.15)) {
    const r = rd(), hue = col[(i * 7) % 477], m = 0.3 + hue * 0.5 - (h < 3800 ? 0.06 : 0);
    if (r < m) { hold = [245, 0, 235]; left = Math.floor(rd() * 4); return hold; }
    if (r < m + 0.12) hold = [20, 0, 25];
    else if (r < m + 0.24) hold = [170, 20, 160];
    else hold = lookup(RAMP, 0.35 + rd() * 0.6);
    left = Math.floor(rd() * 2);
    return hold;
  }
  let v = 0.53 + big(u, h / 5000) * 0.022 + mid(u, h / 5000) * 0.016 + fine(u, h / 5000) * 0.012 + (u - 0.5) * 0.03;
  v -= 0.045 * Math.exp(-Math.pow((u - 0.27) / 0.1, 2) - Math.pow((h - 1100) / 500, 2));
  v -= 0.03 * Math.exp(-Math.pow((u - 0.48) / 0.08, 2) - Math.pow((h - 1000) / 500, 2));
  v += 0.03 * Math.exp(-Math.pow((u - 0.62) / 0.12, 2) - Math.pow((h - 1600) / 500, 2));
  v += 0.085 * Math.max(0, mid(u * 0.97, 0.4) + fine(u, h / 5000) + 0.25) * Math.exp(-Math.pow((h - 620) / 120, 2));
  if (h < 420) v = 0.515 + u * 0.04 + mid(u * 0.3, h / 5000) * 0.01 + fine(u, h / 5000) * 0.005;
  if (h < 40) return rd() < 0.12 ? [0, 0, 0] : [60, 230, 0];
  v += colB[i] * 0.07 * Math.min(1, Math.max(0, (h - 800) / 1500)) + (rd() - 0.5) * 0.17 * Math.min(1, Math.max(0, (h - 1100) / 2400));
  return lookup(RAMP, v);
});

function grid(x, w, h, major, minor, rows) {
  x.fillStyle = '#000'; x.fillRect(0, 0, w, h);
  x.fillStyle = '#072c0b';
  for (let i = 0; i < w; i += minor) x.fillRect(Math.round(i), 0, 1, h);
  for (let j = 5; j < h; j += 5) x.fillRect(0, j, w, 1);
  x.fillStyle = '#125a18';
  for (let i = major; i < w; i += major) x.fillRect(Math.round(i), 0, 1, h);
  rows.forEach(j => x.fillRect(0, j, w, 1));
}
(function aScope() {
  const x = document.getElementById('ascope').getContext('2d'), r = prng(4);
  grid(x, 314, 105, 52.200, 6.525, [25, 50, 74, 98]);
  const curve = [[0, 1.018], [1, 1.08], [4, 1.17], [6, 1.21], [9, 1.21], [13, 1.14], [18, 1.085], [22, 1.055], [30, 1.028], [40, 1.019], [60, 1.012], [90, 1.007], [314, 1.005]];
  x.strokeStyle = '#fff'; x.lineWidth = 1.400; x.beginPath();
  for (let i = 0; i < 314; i += 0.7) {
    const n = i > 26 ? 0.009 : 0.002, v = lookup(curve, i)[0] + (r() + r() - 1) * n;
    x.lineTo(i + 0.5, (1.2 - v) / 0.21 * 103);
  }
  x.stroke();
  x.fillStyle = '#f4ee50'; x.fillRect(173, 0, 1, 105);
})();
(function velocityTrace() {
  const x = document.getElementById('velocity').getContext('2d'), r = prng(12);
  grid(x, 308, 104, 51.300, 6.412, [26, 52, 77]);
  x.fillStyle = '#fff'; x.fillRect(0, 60, 1, 44);
  for (let i = 2; i < 70; i++) {
    const a = i < 18 ? 1 : i < 48 ? 3 : 6, y = 45 + (i > 18 && i < 48 ? 2 : 0) - (i > 52 ? (i - 52) / 4 : 0);
    x.fillRect(i, y - r() * a, 1, 2 + r() * a * 1.600);
  }
  x.fillRect(62, 0, 246, 104);
  // Gaps in the saturated trace: x, top, bottom.
  x.fillStyle = '#000';
  [[64, 0, 34], [67, 0, 38], [70, 0, 30], [72, 0, 36], [75, 0, 36], [79, 0, 30], [83, 0, 16], [89, 0, 22], [92, 0, 26], [95, 0, 26], [131, 0, 22], [132, 0, 104], [158, 0, 34], [160, 0, 40], [172, 0, 22], [177, 0, 32], [196, 0, 16], [198, 0, 45], [201, 0, 34], [206, 0, 44], [216, 0, 28], [220, 0, 16], [227, 0, 46], [230, 0, 40], [240, 0, 22], [242, 0, 44], [252, 0, 104], [254, 0, 50], [266, 0, 36], [269, 20, 52], [288, 0, 34], [290, 10, 104], [294, 0, 46], [301, 0, 104],
   [71, 55, 104], [76, 50, 104], [78, 52, 104], [82, 56, 104], [85, 50, 104], [96, 44, 104], [97, 52, 104], [109, 42, 104], [116, 34, 104], [119, 54, 104], [122, 60, 104], [129, 32, 104], [147, 40, 104], [149, 0, 104], [155, 68, 104], [156, 60, 104], [161, 44, 104], [172, 60, 104], [175, 38, 104], [179, 46, 104], [195, 54, 104], [198, 60, 104], [203, 44, 104], [217, 60, 104], [226, 50, 104], [232, 42, 104], [243, 58, 104], [258, 60, 104], [268, 20, 104], [270, 46, 104], [303, 54, 104]
  ].forEach(g => x.fillRect(g[0], g[1], 1, Math.max(0, g[2] - g[1])));
  x.fillRect(62, 54, 6, 50);
})();
```
